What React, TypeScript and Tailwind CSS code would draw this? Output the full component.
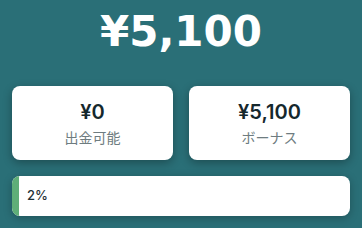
export default function App() {
  return (
    <div
      className="flex h-[228px] w-[362px] flex-col bg-[#2a6f77] px-3"
      style={{ fontFamily: 'Inter, "Noto Sans CJK JP", sans-serif' }}
    >
      {/* Total */}
      <div
        className="flex h-[86px] items-start justify-center pt-[2px] text-[42px] font-bold leading-[60px] text-white"
        style={{ fontFamily: '"DejaVu Sans", "Noto Sans CJK JP", sans-serif' }}
      >
        ¥5,100
      </div>

      {/* Balances */}
      <div className="grid grid-cols-2 gap-4">
        <BalanceCard amount="¥0" label="出金可能" />
        <BalanceCard amount="¥5,100" label="ボーナス" />
      </div>

      {/* Progress */}
      <div className="relative mt-4 h-10 overflow-hidden rounded-lg bg-white shadow-[0_2px_8px_rgba(0,0,0,0.25)]">
        <div className="absolute inset-y-0 left-0 bg-[#5fae78]" style={{ width: "2%" }} />
        <div className="relative flex h-full items-center pl-[15px] text-[13px] font-medium text-[#1f3136]">
          2%
        </div>
      </div>
    </div>
  );
}

function BalanceCard({ amount, label }: { amount: string; label: string }) {
  return (
    <div className="flex h-[74px] flex-col items-center justify-center rounded-lg bg-white shadow-[0_3px_10px_rgba(0,0,0,0.3)]">
      <div className="text-[20px] font-semibold leading-6 text-[#15282d]">{amount}</div>
      <div className="mt-[3px] text-[14px] leading-5 text-[#6e7c80]" style={{ fontFamily: '"Noto Sans CJK JP", sans-serif' }}>
        {label}
      </div>
    </div>
  );
}
